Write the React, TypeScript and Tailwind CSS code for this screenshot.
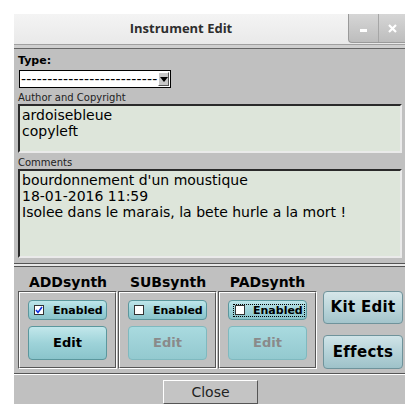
import React from "react";

const font = { fontFamily: '"DejaVu Sans", sans-serif' };

const Check = ({ checked }: { checked: boolean }) => (
  <span className="w-[10px] h-[10px] bg-white border border-[#333] flex items-center justify-center shrink-0">
    {checked && (
      <svg width="8" height="8" viewBox="0 0 8 8">
        <path d="M1 4 L3 6.5 L7 1" stroke="#1030e0" strokeWidth="1.6" fill="none" />
      </svg>
    )}
  </span>
);

const SynthBox = ({
  checked,
  enabled,
  focus,
}: {
  checked: boolean;
  enabled: boolean;
  focus?: boolean;
}) => (
  <div className="w-[99px] h-[78px] border border-t-[#555] border-l-[#555] border-r-white border-b-white">
    <div className="w-full h-full border border-t-white border-l-white border-r-[#555] border-b-[#555] flex flex-col items-center pt-[7px]">
      <div className="w-[79px] h-[20px] rounded-[4px] border border-[#5b979d] bg-gradient-to-b from-[#bfe6ea] via-[#9ed3d9] to-[#88c3ca] flex items-center px-[5px]">
        <div
          className={
            focus
              ? "flex items-center gap-[8px] outline-1 outline-dotted outline-black px-[1px]"
              : "flex items-center gap-[9px]"
          }
        >
          <Check checked={checked} />
          <span className="text-[11px] font-bold text-black leading-none">Enabled</span>
        </div>
      </div>
      <div
        className={
          enabled
            ? "mt-[6px] w-[79px] h-[34px] rounded-[4px] border border-[#5b979d] bg-gradient-to-b from-[#c2e7eb] via-[#9ed3d9] to-[#8ac4cb] flex items-center justify-center text-[13px] font-bold text-black"
            : "mt-[6px] w-[79px] h-[34px] rounded-[4px] border border-[#7fb9bf] bg-gradient-to-b from-[#a9dadf] to-[#93c9cf] flex items-center justify-center text-[13px] font-bold text-[#8a8a8a]"
        }
      >
        Edit
      </div>
    </div>
  </div>
);

export default function App() {
  return (
    <div className="w-[420px] h-[420px] bg-white" style={font}>
      <div className="ml-[14px] pt-[14px] w-[391px]">
        {/* title bar */}
        <div className="h-[31px] bg-gradient-to-b from-[#f4f4f4] to-[#e9e9e9] border-b border-[#a0a0a0] flex">
          <div
            className="flex-1 flex items-center justify-center text-[13px] font-bold text-[#2e2e2e]"
            style={{ fontFamily: '"Open Sans", sans-serif' }}
          >
            Instrument Edit
          </div>
          <div className="w-[57px] h-[29px] flex rounded-bl-[4px] overflow-hidden border-l border-b border-[#9a9a9a] bg-gradient-to-b from-[#d6d6d6] to-[#bdbdbd]">
            <div className="w-[30px] border-r border-[#a6a6a6] flex items-end justify-center pb-[10px]">
              <div className="w-[7px] h-[3px] bg-white" />
            </div>
            <div className="flex-1 flex items-center justify-center">
              <svg width="9" height="9" viewBox="0 0 9 9">
                <path d="M1 1 L8 8 M8 1 L1 8" stroke="white" strokeWidth="2.2" />
              </svg>
            </div>
          </div>
        </div>
        <div className="h-[3px] bg-[#cfcfcf]" />
        <div className="bg-[#c0c0c0] border-t border-[#666] h-[356px] flex flex-col">
          <div className="pl-[4px] pr-[3px]">
            <div className="pt-[5px] text-[11px] font-bold leading-[14px] text-black">Type:</div>
            <div className="mt-[2px] ml-[1px] w-[152px] h-[18px] bg-white border border-black flex items-center justify-between">
              <span className="pl-[1px] text-[14px] tracking-[0.2px] leading-none text-black whitespace-nowrap">
                --------------------------
              </span>
              <span className="w-[11px] h-[14px] mr-[1px] bg-[#c8c8c8] border border-t-white border-l-white border-r-[#555] border-b-[#555] flex items-center justify-center shrink-0">
                <svg width="8" height="5" viewBox="0 0 8 5">
                  <path d="M0 0 L8 0 L4 5 Z" fill="black" />
                </svg>
              </span>
            </div>
            <div className="mt-[3px] text-[10px] leading-[13px] text-[#222]">Author and Copyright</div>
            <div className="h-[49px] bg-[#dde5da] border-2 border-t-[#2a2a2a] border-l-[#2a2a2a] border-r-[#eaeaea] border-b-[#eaeaea] px-[2px] pt-[1px] text-[14px] leading-[16px] text-black">
              <div>ardoisebleue</div>
              <div>copyleft</div>
            </div>
            <div className="mt-[3px] text-[10px] leading-[13px] text-[#222]">Comments</div>
            <div className="h-[89px] bg-[#dde5da] border-2 border-t-[#2a2a2a] border-l-[#2a2a2a] border-r-[#eaeaea] border-b-[#eaeaea] px-[2px] pt-[1px] text-[14px] leading-[16px] text-black">
              <div>bourdonnement d'un moustique</div>
              <div>18-01-2016 11:59</div>
              <div>Isolee dans le marais, la bete hurle a la mort !</div>
            </div>
          </div>
          <div className="mt-[5px] h-[4px] border-t border-b border-[#555] bg-[#e8e8e8]" />
          <div className="pl-[4px] pt-[7px] flex">
            <div className="flex flex-col">
              <div className="flex">
                <div className="w-[100px] text-center text-[14px] font-bold leading-[17px] text-black">ADDsynth</div>
                <div className="w-[100px] text-center text-[14px] font-bold leading-[17px] text-black">SUBsynth</div>
                <div className="w-[99px] text-center text-[14px] font-bold leading-[17px] text-black">PADsynth</div>
              </div>
              <div className="flex gap-[1px]">
                <SynthBox checked enabled />
                <SynthBox checked={false} enabled={false} />
                <SynthBox checked={false} enabled={false} focus />
              </div>
            </div>
            <div className="ml-[6px] pt-[17px] flex flex-col gap-[11px]">
              <div className="w-[80px] h-[33px] rounded-[4px] border border-[#6f939b] bg-gradient-to-b from-[#d6e6e9] via-[#bcd6db] to-[#a3c4cb] flex items-center justify-center text-[15px] tracking-[0.3px] font-bold text-black">
                Kit Edit
              </div>
              <div className="w-[80px] h-[34px] rounded-[4px] border border-[#6f939b] bg-gradient-to-b from-[#d0e4e8] via-[#b6d3d9] to-[#9ec2c9] flex items-center justify-center text-[15px] tracking-[0.3px] font-bold text-black">
                Effects
              </div>
            </div>
          </div>
          <div className="mt-[4px] h-[2px] border-t border-[#555] bg-white" />
          <div className="flex-1 flex items-start pt-[5px] pl-[149px]">
            <div className="w-[95px] h-[24px] bg-[#c4c4c4] border border-t-white border-l-white border-r-[#555] border-b-[#555] flex items-center justify-center text-[14px] text-[#222]">
              Close
            </div>
          </div>
        </div>
      </div>
    </div>
  );
}
